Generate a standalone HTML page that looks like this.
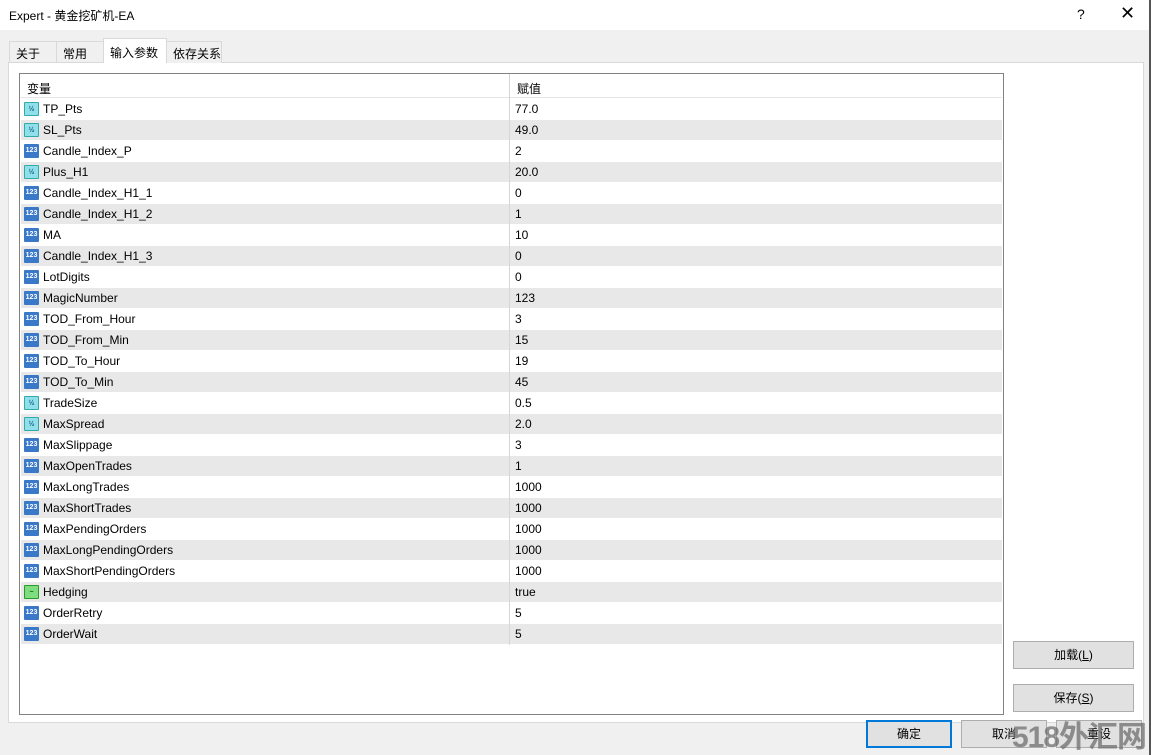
<!DOCTYPE html><html><head><meta charset="utf-8"><style>
*{margin:0;padding:0;box-sizing:border-box}
html,body{width:1151px;height:755px;overflow:hidden}
body{background:#f0f0f0;font-family:"Liberation Sans","Microsoft YaHei","Noto Sans CJK SC",sans-serif;font-size:12px;color:#000;position:relative}
.abs{position:absolute;white-space:nowrap}
.title{left:0;top:0;width:1151px;height:30px;background:#fff}
.tab{top:41px;height:22px;border:1px solid #d9d9d9;border-bottom:none;background:#f0f0f0;padding:3px 0 0 6px;font-size:12px}
.panel{left:8px;top:62px;width:1136px;height:661px;background:#fff;border:1px solid #d9d9d9}
.list{left:19px;top:73px;width:985px;height:642px;border:1px solid #828282;background:#fff;overflow:hidden}
.row{position:absolute;left:1px;width:981px;height:21px;border-bottom:1px solid #fff}
.row.g{background:#e8e8e8}
.row span{position:absolute;top:3px}
.n{left:22px}.v{left:494px}
.sep{position:absolute;left:489px;top:0;width:1px;height:571px;background:#d5d5d5}
.ic{position:absolute;left:3px;top:3px;width:15px;height:14px;border-radius:1px;font-size:7px;line-height:14px;text-align:center;font-weight:bold}
.i1{background:#3a78c8;color:#fff}
.i2{background:#8fe0ea;color:#1a5a8a;border:1px solid #3aa;}
.i3{background:#7fdc7f;border:1px solid #2a9a2a;color:#060}
.btn{height:28px;background:#e1e1e1;border:1px solid #adadad;text-align:center;line-height:26px}
</style></head><body>
<div class="abs title"><span class="abs" style="left:9px;top:7px">Expert - 黄金挖矿机-EA</span>
<span class="abs" style="left:1077px;top:6px;font-size:14px">?</span>
<span class="abs" style="left:1120px;top:3px;font-size:18px">✕</span></div>
<div class="abs tab" style="left:9px;width:48px">关于</div>
<div class="abs tab" style="left:56px;width:48px">常用</div>
<div class="abs panel"></div>
<div class="abs tab" style="left:103px;width:64px;top:38px;height:25px;background:#fff;padding-top:5px">输入参数</div>
<div class="abs tab" style="left:166px;width:56px">依存关系</div>
<div class="abs list">
<div class="row" style="top:1px;height:23px;border-bottom:1px solid #e5e5e5"><span style="left:6px;top:5px">变量</span><span style="left:496px;top:5px">赋值</span></div>
<div id="rows"></div>
<div class="sep" style="top:0"></div>
</div>
<div class="abs btn" style="left:1013px;top:641px;width:121px">加载(<u>L</u>)</div>
<div class="abs btn" style="left:1013px;top:684px;width:121px">保存(<u>S</u>)</div>
<div class="abs btn" style="left:866px;top:720px;width:86px;border:2px solid #0078d7;line-height:24px">确定</div>
<div class="abs btn" style="left:961px;top:720px;width:86px">取消</div>
<div class="abs btn" style="left:1056px;top:720px;width:86px">重设</div>
<div class="abs" style="left:1012px;top:712px;font-size:30px;font-weight:bold;letter-spacing:-1px;color:rgba(110,110,110,.75)">518外汇网</div>
<div class="abs" style="left:1149px;top:0;width:2px;height:755px;background:#555"></div>
<script>
var d=[["TP_Pts","77.0",2],["SL_Pts","49.0",2],["Candle_Index_P","2",1],["Plus_H1","20.0",2],["Candle_Index_H1_1","0",1],["Candle_Index_H1_2","1",1],["MA","10",1],["Candle_Index_H1_3","0",1],["LotDigits","0",1],["MagicNumber","123",1],["TOD_From_Hour","3",1],["TOD_From_Min","15",1],["TOD_To_Hour","19",1],["TOD_To_Min","45",1],["TradeSize","0.5",2],["MaxSpread","2.0",2],["MaxSlippage","3",1],["MaxOpenTrades","1",1],["MaxLongTrades","1000",1],["MaxShortTrades","1000",1],["MaxPendingOrders","1000",1],["MaxLongPendingOrders","1000",1],["MaxShortPendingOrders","1000",1],["Hedging","true",3],["OrderRetry","5",1],["OrderWait","5",1]];
var h="";d.forEach(function(r,i){var t=r[2]==1?"123":r[2]==2?"½":"~";
h+='<div class="row'+(i%2?' g':'')+'" style="top:'+(25+i*21)+'px"><div class="ic i'+r[2]+'">'+t+'</div><span class="n">'+r[0]+'</span><span class="v">'+r[1]+'</span></div>';});
document.getElementById("rows").outerHTML=h;
</script>
</body></html>
